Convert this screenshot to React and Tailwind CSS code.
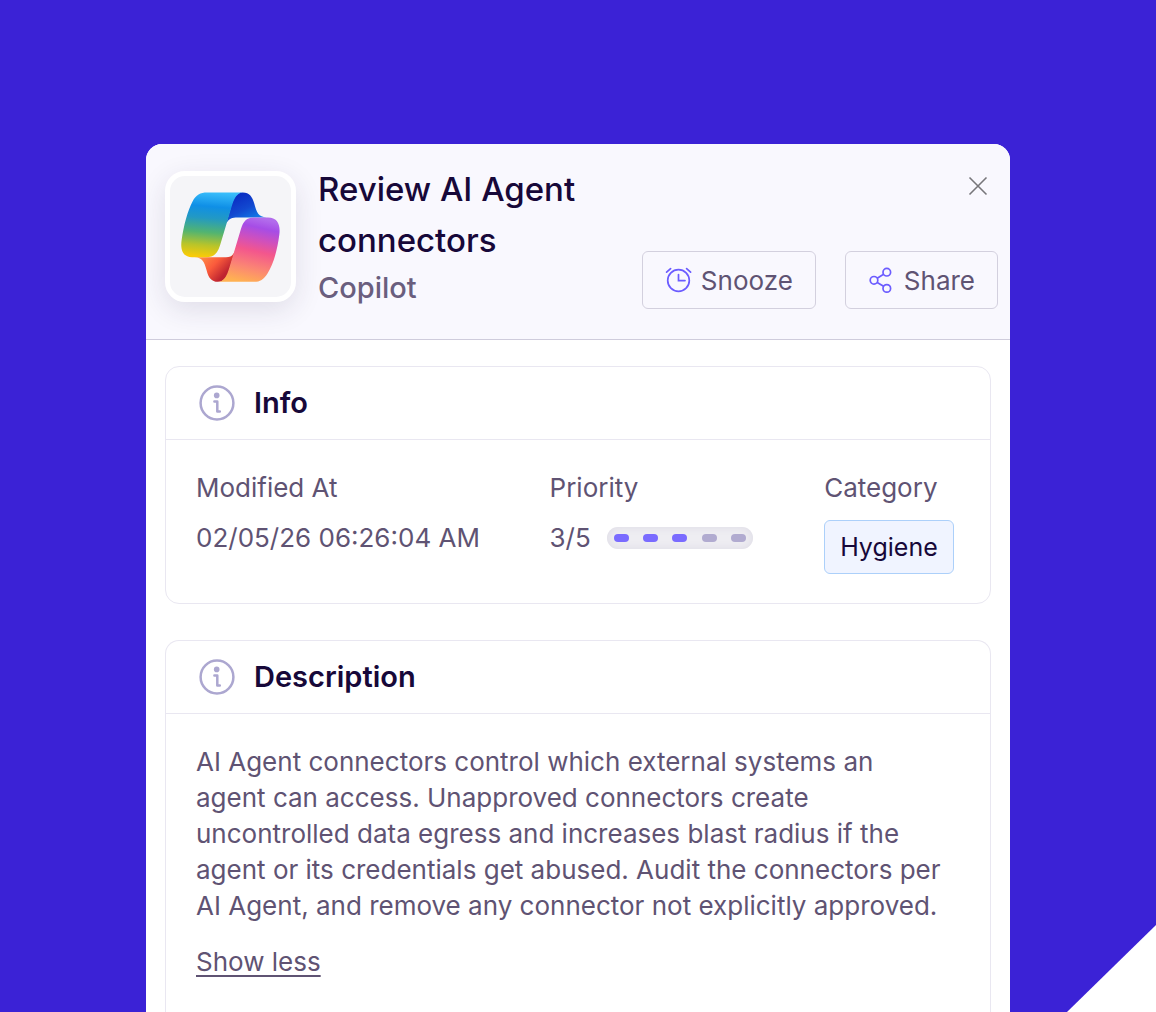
import { useState } from "react";

const PRIORITY = 3;
const MAX_PRIORITY = 5;

const DESCRIPTION = `AI Agent connectors control which external systems an
agent can access. Unapproved connectors create
uncontrolled data egress and increases blast radius if the
agent or its credentials get abused. Audit the connectors per
AI Agent, and remove any connector not explicitly approved.`;

function CopilotLogo() {
    return (
        <svg viewBox="105 125 297 269" className="h-[90px] w-[99px]" aria-hidden="true">
            <defs>
                <linearGradient id="ribbonLeft" x1="0.53" y1="0" x2="0.45" y2="1">
                    <stop offset="0" stopColor="#38bdfb" />
                    <stop offset="0.22" stopColor="#0f8fe6" />
                    <stop offset="0.4" stopColor="#2299c4" />
                    <stop offset="0.62" stopColor="#52b471" />
                    <stop offset="0.82" stopColor="#b8c42a" />
                    <stop offset="1" stopColor="#f9cb08" />
                </linearGradient>
                <linearGradient id="foldTop" x1="0.2" y1="0.2" x2="0.7" y2="1">
                    <stop offset="0" stopColor="#0b30c4" />
                    <stop offset="0.45" stopColor="#1249d0" />
                    <stop offset="1" stopColor="#1289ee" />
                </linearGradient>
                <linearGradient id="ribbonRight" x1="0.62" y1="0" x2="0.4" y2="1">
                    <stop offset="0" stopColor="#b26cec" />
                    <stop offset="0.14" stopColor="#a64de6" />
                    <stop offset="0.32" stopColor="#cf50bd" />
                    <stop offset="0.5" stopColor="#f3568d" />
                    <stop offset="0.76" stopColor="#fb8574" />
                    <stop offset="1" stopColor="#ffb152" />
                </linearGradient>
                <linearGradient id="foldBottom" x1="0.15" y1="0.1" x2="0.85" y2="0.6">
                    <stop offset="0" stopColor="#ff9348" />
                    <stop offset="0.55" stopColor="#fa5b3c" />
                    <stop offset="1" stopColor="#bf2430" />
                </linearGradient>
            </defs>
            <path
                fill="url(#foldTop)"
                d="M290 126C311 126 319 139 325 160C332 186 337 200 362 201H275C258 201 250 204 241 218L255 168C262 144 270 126 290 126Z"
            />
            <path
                fill="url(#foldBottom)"
                d="M240 320C255 320 261 315 267 301L252 352C245 377 236 394 216 394C196 394 187 381 182 360C175 333 169 321 146 320Z"
            />
            <path
                fill="url(#ribbonLeft)"
                d="M183 126H292C272 126 264 145 257 168L222 285C214 310 203 320 180 320H138C112 320 102 300 107 268C113 225 125 180 140 152C150 133 163 126 183 126Z"
            />
            <path
                fill="url(#ribbonRight)"
                d="M324 201H366C394 201 404 222 400 252C394 300 381 344 365 368C353 387 342 394 325 394H215C235 394 243 375 250 352L285 235C292 212 302 201 324 201Z"
            />
        </svg>
    );
}

function SnoozeIcon() {
    return (
        <svg viewBox="0 0 28 28" className="size-7" fill="none" stroke="#6c5cff" strokeWidth="1.7" strokeLinecap="round" aria-hidden="true">
            <circle cx="13.5" cy="14.5" r="10.8" />
            <path d="M13.5 8.6V14.6H20M1.6 6.2L5.6 2.6M21.6 2.6L25.6 6.2" />
        </svg>
    );
}

function ShareIcon() {
    return (
        <svg viewBox="0 0 28 28" className="size-7" fill="none" stroke="#6c5cff" strokeWidth="1.7" aria-hidden="true">
            <circle cx="6" cy="14.3" r="3.8" />
            <circle cx="18.8" cy="6.2" r="3.8" />
            <circle cx="18.8" cy="22.4" r="3.8" />
            <path d="M9.2 12.2L15.6 8.3M9.2 16.4L15.6 20.3" />
        </svg>
    );
}

function InfoIcon() {
    return (
        <svg viewBox="0 0 36 36" className="size-9" fill="none" stroke="#aca7d0" strokeWidth="2.5" aria-hidden="true">
            <circle cx="18" cy="18" r="16.4" />
            <circle cx="17.7" cy="10.4" r="2.8" fill="#aca7d0" stroke="none" />
            <path d="M15.4 16.4H18.3V26.4H20.8" strokeWidth="2.5" strokeLinecap="round" strokeLinejoin="round" />
        </svg>
    );
}

function ActionButton({ icon, children }) {
    return (
        <button
            type="button"
            className="flex h-[58px] items-center gap-2 rounded-md border border-[#d3d0de] px-[22px] text-[26px] text-[#5f5373]"
        >
            {icon}
            {children}
        </button>
    );
}

function Section({ title, className, children }) {
    return (
        <section className={`border border-[#e9e7f1] ${className}`}>
            <div className="flex h-[73px] items-center gap-[19px] border-b border-[#e9e7f1] px-[33px]">
                <InfoIcon />
                <h2 className="text-[29px] font-semibold text-[#170839]">{title}</h2>
            </div>
            {children}
        </section>
    );
}

function PriorityMeter() {
    return (
        <div className="flex h-[22px] w-[146px] items-center justify-between rounded-full bg-[#eeedf2] px-[7px] shadow-[inset_0_0_8px_#dcdae4]">
            {Array.from({ length: MAX_PRIORITY }, (_, i) => (
                <span
                    key={i}
                    className={`h-2 w-[15px] rounded-full ${i < PRIORITY ? "bg-[#7a6bff]" : "bg-[#b1abd0]"}`}
                />
            ))}
        </div>
    );
}

function App() {
    const [expanded, setExpanded] = useState(true);

    return (
        <div className="relative flex h-screen flex-col overflow-hidden bg-[#3b22d6] px-[146px] pt-36 font-['Inter',sans-serif] text-[#5f5373]">
            {/* Page corner */}
            <div className="absolute right-0 bottom-0 h-[87px] w-[89px] bg-white [clip-path:polygon(100%_0,100%_100%,0_100%)]" />

            <main className="flex min-h-0 flex-1 flex-col overflow-hidden rounded-t-2xl bg-white">
                {/* Header */}
                <header className="flex h-[196px] shrink-0 border-b border-[#cfccdc] bg-[#f9f8fe] pr-3 pl-[19px]">
                    <div className="mt-[27px] flex size-[131px] shrink-0 items-center justify-center rounded-[20px] border-5 border-white bg-[#f5f5f8] shadow-[0_8px_28px_rgba(40,30,70,0.12)]">
                        <CopilotLogo />
                    </div>
                    <div className="mt-5 ml-[22px] w-[280px]">
                        <h1 className="text-[33px] leading-[51px] font-medium text-[#170839]">
                            Review AI Agent connectors
                        </h1>
                        <p className="text-[29px] leading-[44px] font-medium text-[#6a5e7e]">Copilot</p>
                    </div>
                    <div className="flex flex-1 flex-col items-end justify-between pt-7 pb-[30px]">
                        <button type="button" aria-label="Close" className="mr-2">
                            <svg viewBox="0 0 24 24" className="size-6 text-[#77767a]" fill="none" stroke="currentColor" strokeWidth="1.6" aria-hidden="true">
                                <path d="M3.5 5.5L20.5 22.5M20.5 5.5L3.5 22.5" />
                            </svg>
                        </button>
                        <div className="flex gap-[29px]">
                            <ActionButton icon={<SnoozeIcon />}>Snooze</ActionButton>
                            <ActionButton icon={<ShareIcon />}>Share</ActionButton>
                        </div>
                    </div>
                </header>

                <div className="flex min-h-0 flex-1 flex-col gap-9 px-[19px] pt-[26px]">
                    {/* Info */}
                    <Section title="Info" className="shrink-0 rounded-[14px]">
                        <dl className="grid grid-cols-[354fr_275fr_136fr] px-[30px] pt-[30px] pb-[29px] text-[26px] leading-9">
                            <div className="space-y-[14px]">
                                <dt>Modified At</dt>
                                <dd>02/05/26 06:26:04 AM</dd>
                            </div>
                            <div className="space-y-[14px]">
                                <dt>Priority</dt>
                                <dd className="flex items-center gap-4">
                                    {PRIORITY}/{MAX_PRIORITY}
                                    <PriorityMeter />
                                </dd>
                            </div>
                            <div className="space-y-[14px]">
                                <dt>Category</dt>
                                <dd className="inline-flex h-[54px] items-center rounded-md border border-[#acd0fa] bg-[#f0f4ff] px-[15px] text-[25px] text-[#170839]">
                                    Hygiene
                                </dd>
                            </div>
                        </dl>
                    </Section>

                    {/* Description */}
                    <Section title="Description" className="flex-1 rounded-t-[14px] border-b-0">
                        <div className="px-[30px] pt-[30px] text-[26px]">
                            <p className={`leading-9 whitespace-pre-line ${expanded ? "" : "line-clamp-2"}`}>
                                {DESCRIPTION}
                            </p>
                            <button
                                type="button"
                                onClick={() => setExpanded(!expanded)}
                                className="mt-5 leading-9 underline decoration-2 underline-offset-4"
                            >
                                {expanded ? "Show less" : "Show more"}
                            </button>
                        </div>
                    </Section>
                </div>
            </main>
        </div>
    );
}

export default App;
